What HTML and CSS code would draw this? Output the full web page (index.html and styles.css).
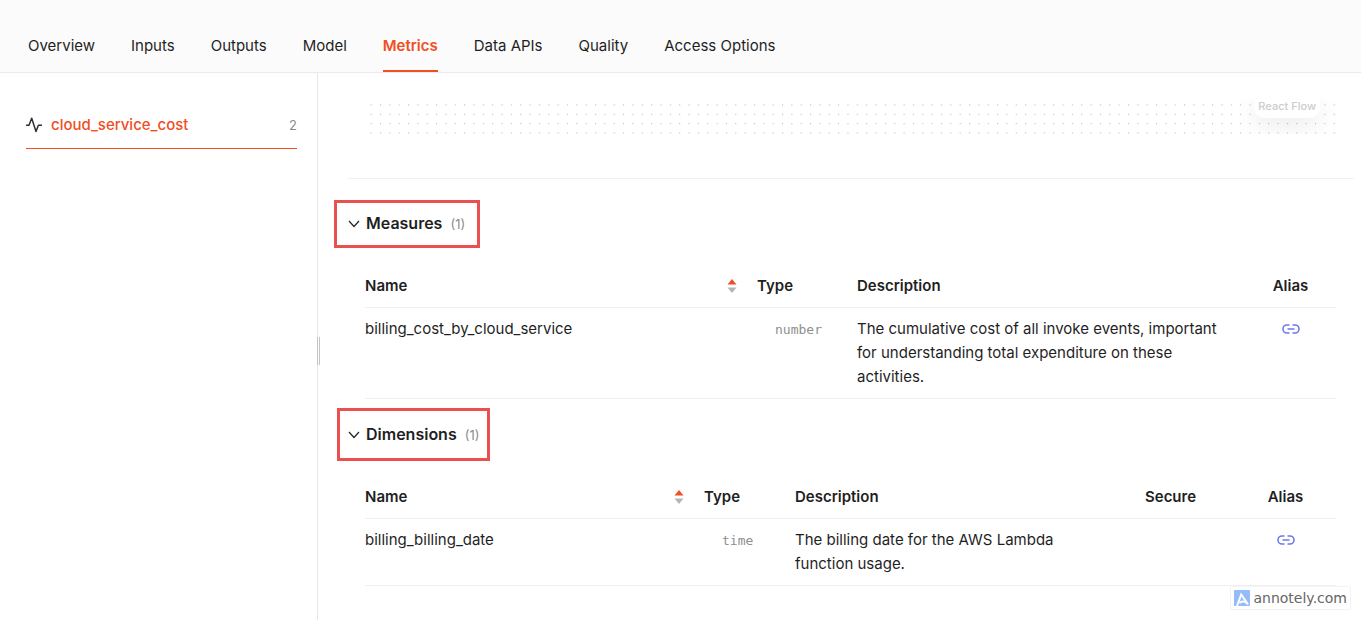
FILE: index.html
```html
<!DOCTYPE html>
<html lang="en">
<head>
<meta charset="utf-8">
<title>Metrics</title>
<link rel="stylesheet" href="styles.css">
</head>
<body>
<div class="app">
  <nav class="tabs">
    <a class="tab" href="#">Overview</a>
    <a class="tab" href="#">Inputs</a>
    <a class="tab" href="#">Outputs</a>
    <a class="tab" href="#">Model</a>
    <a class="tab tab-active" href="#">Metrics</a>
    <a class="tab" href="#">Data APIs</a>
    <a class="tab" href="#">Quality</a>
    <a class="tab" href="#">Access Options</a>
  </nav>
  <div class="body">
    <aside class="sidebar">
      <a class="metric" href="#">
        <svg class="pulse" viewBox="0 0 16 16" width="16" height="16"><path d="M0.5 8.2H3L5.7 1.2L10 14.6L12.4 8.2H15.5" fill="none" stroke="#2b2f38" stroke-width="1.5" stroke-linejoin="round" stroke-linecap="round"/></svg>
        <span class="metric-name">cloud_service_cost</span>
        <span class="metric-count">2</span>
      </a>
      <div class="handle"></div>
    </aside>
    <main class="content">
      <div class="flow-wrap">
        <div class="flow">
          <svg class="dots" width="100%" height="100%">
            <defs><pattern id="dot" width="9.35" height="9.35" x="1.6" y="5.4" patternUnits="userSpaceOnUse"><rect width="1.1" height="1.1" fill="#bbb"/></pattern></defs>
            <rect width="100%" height="100%" fill="url(#dot)"/>
          </svg>
          <a class="flow-badge" href="#">React Flow</a>
        </div>
      </div>
      <section class="group">
        <h2 class="group-title">
          <button class="toggle mark-measures" type="button"><svg class="chevron" viewBox="0 0 12 10" width="12" height="10"><path d="M1 3L6 8.5L11 3" fill="none" stroke="#222" stroke-width="1.2"/></svg><span>Measures</span><span class="count">(1)</span></button>
        </h2>
        <table class="grid">
          <colgroup><col><col class="w-type"><col class="w-desc"><col class="w-alias"></colgroup>
          <thead><tr>
            <th><div class="sortable"><span>Name</span><svg class="sort" viewBox="0 0 10 14" width="10" height="14"><path d="M0.5 5.5L5 0L9.5 5.5Z" fill="#f04e23"/><path d="M0.5 8.5L5 14L9.5 8.5Z" fill="#b5b5b5"/></svg></div></th>
            <th>Type</th><th>Description</th><th class="center">Alias</th>
          </tr></thead>
          <tbody><tr>
            <td>billing_cost_by_cloud_service</td>
            <td><code class="kind">number</code></td>
            <td>The cumulative cost of all invoke events, important for understanding total expenditure on these activities.</td>
            <td class="center"><a class="link" href="#" aria-label="Alias"><svg viewBox="0 0 18 10" width="18" height="10"><path d="M7.5 1H5a4 4 0 0 0 0 8H7.5M10.5 1H13a4 4 0 0 1 0 8H10.5M5.5 5H12.5" fill="none" stroke="#6f78f0" stroke-width="1.6"/></svg></a></td>
          </tr></tbody>
        </table>
      </section>
      <section class="group">
        <h2 class="group-title">
          <button class="toggle mark-dimensions" type="button"><svg class="chevron" viewBox="0 0 12 10" width="12" height="10"><path d="M1 3L6 8.5L11 3" fill="none" stroke="#222" stroke-width="1.2"/></svg><span>Dimensions</span><span class="count">(1)</span></button>
        </h2>
        <table class="grid">
          <colgroup><col><col class="w-type-s"><col class="w-desc-s"><col class="w-secure"><col class="w-alias-s"></colgroup>
          <thead><tr>
            <th><div class="sortable"><span>Name</span><svg class="sort" viewBox="0 0 10 14" width="10" height="14"><path d="M0.5 5.5L5 0L9.5 5.5Z" fill="#f04e23"/><path d="M0.5 8.5L5 14L9.5 8.5Z" fill="#b5b5b5"/></svg></div></th>
            <th>Type</th><th>Description</th><th>Secure</th><th class="center">Alias</th>
          </tr></thead>
          <tbody><tr>
            <td>billing_billing_date</td>
            <td><code class="kind">time</code></td>
            <td>The billing date for the AWS Lambda function usage.</td>
            <td></td>
            <td class="center"><a class="link" href="#" aria-label="Alias"><svg viewBox="0 0 18 10" width="18" height="10"><path d="M7.5 1H5a4 4 0 0 0 0 8H7.5M10.5 1H13a4 4 0 0 1 0 8H10.5M5.5 5H12.5" fill="none" stroke="#6f78f0" stroke-width="1.6"/></svg></a></td>
          </tr></tbody>
        </table>
      </section>
    </main>
  </div>
  <div class="watermark">
    <svg viewBox="0 0 16 16" width="16" height="16"><rect width="16" height="16" rx="1" fill="#94bcfa"/><path d="M3 16L7.2 4.5C9.5 7.5 11.5 11 14 14.5M5.5 13C7.5 11 10 11 12.5 12.8" fill="none" stroke="#fff" stroke-width="2"/></svg>
    <span>annotely.com</span>
  </div>
</div>
</body>
</html>
```

FILE: styles.css
```css
* { box-sizing: border-box; }
body {
  margin: 0;
  font-family: Inter, "Liberation Sans", sans-serif;
  font-size: 15px;
  line-height: 24px;
  color: #1f1f1f;
  background: #fff;
}
a { color: inherit; text-decoration: none; }
.app { position: relative; display: flex; flex-direction: column; min-height: 100vh; }
.tabs {
  display: flex;
  gap: 36px;
  padding: 34px 28px 0;
  background: #fbfbfb;
  border-bottom: 1px solid #e9ebf0;
}
.tab { padding-bottom: 12px; border-bottom: 2px solid transparent; white-space: nowrap; }
.tab-active { color: #f04e23; font-weight: 600; border-color: #f04e23; }
.body { display: flex; flex: 1; }
.sidebar {
  position: relative;
  flex: none;
  width: 318px;
  padding: 40px 20px 0 26px;
  border-right: 1px solid #e6e6e6;
}
.metric {
  display: flex;
  align-items: center;
  gap: 9px;
  padding-bottom: 11px;
  border-bottom: 1px solid #f04e23;
}
.metric-name { flex: 1; color: #f04e23; font-weight: 500; }
.metric-count { font-size: 13px; color: #8c8c8c; }
.handle {
  position: absolute;
  right: -3px;
  top: 264px;
  width: 3px;
  height: 28px;
  border: solid #c4c4c4;
  border-width: 0 1px;
}
.content { flex: 1; min-width: 0; padding: 0 7px 0 30px; }
.flow-wrap { padding: 26px 18px 44px 21px; border-bottom: 1px solid #f0f0f0; }
.flow { position: relative; height: 35px; overflow: hidden; }
.dots { display: block; }
.flow-badge {
  position: absolute;
  right: 16px;
  top: -5px;
  padding: 0 4px;
  border-radius: 10px;
  background: #fff;
  box-shadow: 0 8px 24px rgba(0, 0, 0, 0.08);
  font-size: 11px;
  font-weight: 500;
  color: #ccc;
}
.group { padding-right: 18px; }
.group-title { display: flex; margin: 0; padding: 23px 0 28px; font-size: 16px; }
.group:first-of-type .group-title { padding-top: 32px; }
.toggle {
  position: relative;
  display: flex;
  align-items: center;
  gap: 6px;
  padding: 0;
  border: 0;
  background: none;
  font: inherit;
  font-weight: 600;
  color: inherit;
}
.count { margin-left: 2px; padding-top: 1px; font-size: 13px; line-height: 22px; font-weight: 400; color: #8c8c8c; }
.toggle::after { content: ""; position: absolute; border: 3px solid #ec4f4f; }
.mark-measures::after { inset: -11px -15px -13px -14px; }
.mark-dimensions::after { inset: -14px -11px -15px -11px; }
.grid {
  width: calc(100% - 17px);
  margin-left: 17px;
  table-layout: fixed;
  border-collapse: separate;
  border-spacing: 0;
}
.grid th {
  padding: 11px 12px 9px;
  border-bottom: 1px solid #f0f0f0;
  text-align: left;
  font-weight: 600;
}
.grid td { padding: 9px 24px 9px 12px; border-bottom: 1px solid #f0f0f0; vertical-align: top; }
.grid th:first-child, .grid td:first-child { padding-left: 0; padding-right: 8px; }
.grid .center { padding-left: 0; padding-right: 0; text-align: center; }
.w-type { width: 100px; }
.w-desc { width: 400px; }
.w-alias { width: 91px; }
.w-type-s { width: 91px; }
.w-desc-s { width: 350px; }
.w-secure { width: 102px; }
.w-alias-s { width: 101px; }
.sortable { display: flex; align-items: center; justify-content: space-between; }
.kind { margin-left: 18px; font-family: "DejaVu Sans Mono", monospace; font-size: 13px; color: #8f8f8f; }
.watermark {
  position: absolute;
  right: 10px;
  bottom: 10px;
  display: flex;
  align-items: center;
  gap: 3px;
  padding: 0 3px;
  border: 1px solid #f3f3f3;
  border-radius: 2px;
  background: #fff;
  font-family: "DejaVu Sans", sans-serif;
  font-size: 14px;
  line-height: 22px;
  color: #666;
}
```
